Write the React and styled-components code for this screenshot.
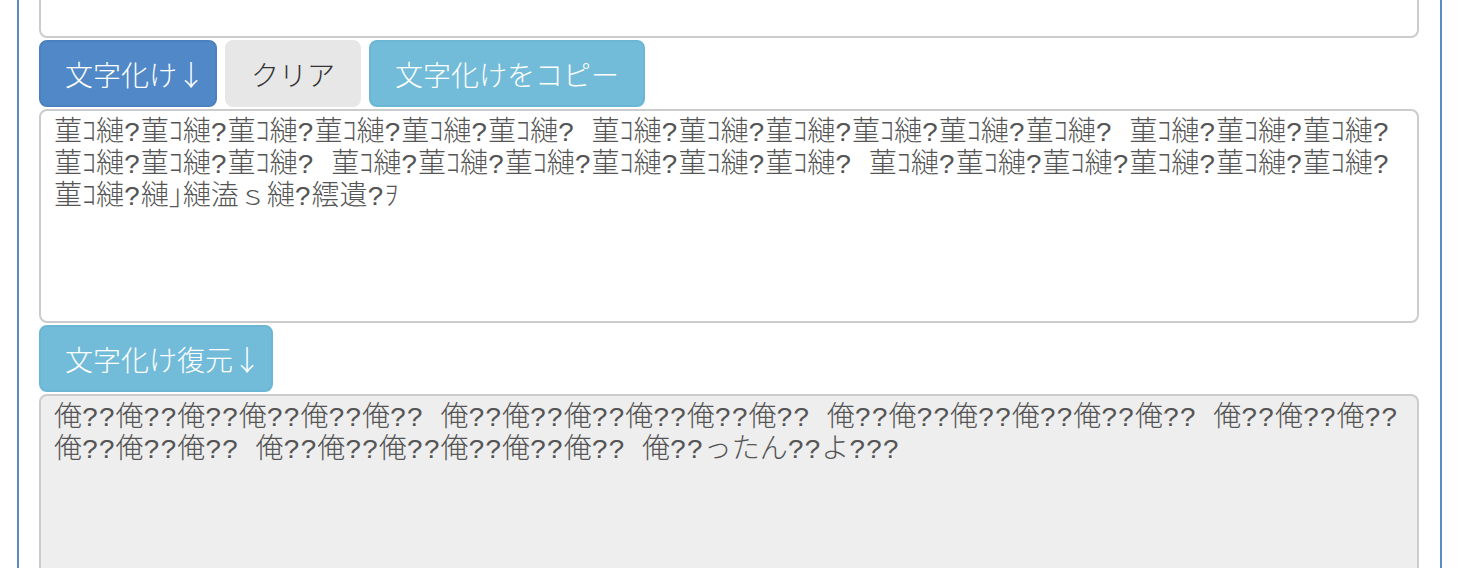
import React, { useState } from 'react';
import styled, { createGlobalStyle } from 'styled-components';

const GlobalStyle = createGlobalStyle`
  html, body {
    margin: 0;
    padding: 0;
    background: #fff;
    overflow: hidden;
  }
`;

const ORIGINAL = '俺だ俺だ俺だ俺だ俺だ俺だ 俺だ俺だ俺だ俺だ俺だ俺だ 俺だ俺だ俺だ俺だ俺だ俺だ 俺だ俺だ俺だ俺だ俺だ俺だ 俺だ俺だ俺だ俺だ俺だ俺だ 俺だったんだよ…';

const sets = (unit) => [1, 2, 3, 4, 5].map(() => unit.repeat(6)).join(' ');
const GARBLED = sets('菫ｺ縺?') + ' 菫ｺ縺?縺｣縺溘ｓ縺?繧遺?ｦ';
const RESTORED = sets('俺??') + ' 俺??ったん??よ???';

const App = () => {
  const [source, setSource] = useState(ORIGINAL);
  const [garbled, setGarbled] = useState(GARBLED);

  return (
    <>
      <GlobalStyle />
      <Panel>
        <Field value={source} onChange={(e) => setSource(e.target.value)} />
        <ButtonRow>
          <Button variant="primary">
            文字化け<Arrow>↓</Arrow>
          </Button>
          <Button variant="default" onClick={() => setSource('')}>
            クリア
          </Button>
          <Button variant="info">文字化けをコピー</Button>
        </ButtonRow>
        <Field value={garbled} onChange={(e) => setGarbled(e.target.value)} />
        <ButtonRow>
          <Button variant="info">
            文字化け復元<Arrow>↓</Arrow>
          </Button>
        </ButtonRow>
        <Field value={RESTORED} readOnly />
      </Panel>
    </>
  );
};

const colors = {
  primary: { bg: '#5188c7', border: '#4c81bf', fg: '#fff' },
  default: { bg: '#e7e7e7', border: '#e7e7e7', fg: '#333' },
  info: { bg: '#72bbd9', border: '#6cb6d5', fg: '#fff' },
};

const Panel = styled.div`
  box-sizing: border-box;
  width: 1425px;
  margin: -176px 0 0 17px;
  padding: 0 21px 40px 20px;
  border-left: 2px solid #5b8bc2;
  border-right: 2px solid #5b8bc2;
  display: flex;
  flex-direction: column;
  gap: 2px;
`;

const Field = styled.textarea`
  display: block;
  box-sizing: border-box;
  width: 100%;
  height: 214px;
  margin: 0;
  padding: 7px 13px;
  border: 2px solid #cccccc;
  border-radius: 8px;
  background: ${(p) => (p.readOnly ? '#eeeeee' : '#ffffff')};
  color: #555555;
  font-family: 'Liberation Mono', 'Noto Sans CJK JP', monospace;
  font-size: 28px;
  font-weight: 300;
  line-height: 32px;
  resize: none;
  outline: none;
  white-space: pre-wrap;
  word-break: break-all;
`;

const ButtonRow = styled.div`
  display: flex;
  gap: 8px;
`;

const Button = styled.button`
  box-sizing: border-box;
  height: 67px;
  margin: 0;
  padding: 0 24px;
  border: 2px solid ${(p) => colors[p.variant].border};
  border-radius: 8px;
  background: ${(p) => colors[p.variant].bg};
  color: ${(p) => colors[p.variant].fg};
  font-family: 'Noto Sans CJK JP', 'Noto Sans', sans-serif;
  font-size: 28px;
  font-weight: 300;
  line-height: 40px;
  cursor: pointer;
`;

const Arrow = styled.span`
  letter-spacing: -14px;
`;

export default App;
